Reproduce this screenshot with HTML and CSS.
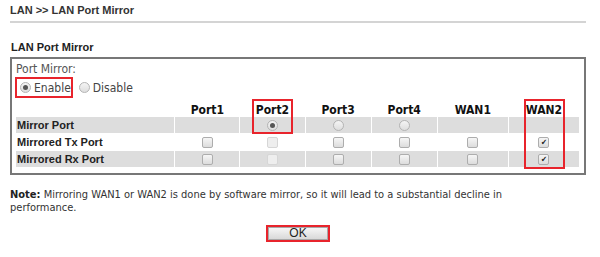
FILE: index.html
```html
<!DOCTYPE html>
<html lang="en">
<head>
  <meta charset="UTF-8">
  <title>LAN Port Mirror</title>
  <link rel="stylesheet" href="styles.css">
</head>
<body>
  <div class="crumb">LAN &gt;&gt; LAN Port Mirror</div>

  <div class="section">LAN Port Mirror</div>
  <div class="box">
    <div class="caption">Port Mirror:</div>
    <div class="choice">
      <span class="mark"><span class="radio on"></span>Enable</span>
      <span class="radio"></span>Disable
    </div>

    <div class="grid">
      <table class="ports">
        <tr class="head">
          <td class="label"></td>
          <td class="c1">Port1</td>
          <td class="c2">Port2</td>
          <td class="c3">Port3</td>
          <td class="c4">Port4</td>
          <td class="c5">WAN1</td>
          <td class="c6">WAN2</td>
        </tr>
        <tr class="shade">
          <td class="label">Mirror Port</td>
          <td></td>
          <td><span class="radio on"></span></td>
          <td><span class="radio"></span></td>
          <td><span class="radio"></span></td>
          <td></td>
          <td></td>
        </tr>
        <tr>
          <td class="label">Mirrored Tx Port</td>
          <td><span class="check"></span></td>
          <td><span class="check off"></span></td>
          <td><span class="check"></span></td>
          <td><span class="check"></span></td>
          <td><span class="check"></span></td>
          <td><span class="check on">&#10004;</span></td>
        </tr>
        <tr class="shade">
          <td class="label">Mirrored Rx Port</td>
          <td><span class="check"></span></td>
          <td><span class="check off"></span></td>
          <td><span class="check"></span></td>
          <td><span class="check"></span></td>
          <td><span class="check"></span></td>
          <td><span class="check on">&#10004;</span></td>
        </tr>
      </table>
      <!-- red call-outs drawn over the table -->
      <div class="hl hl-port2"></div>
      <div class="hl hl-wan2"></div>
    </div>
  </div>

  <p class="note"><b>Note:</b> Mirroring WAN1 or WAN2 is done by software mirror, so it will lead to a substantial decline in performance.</p>

  <div class="actions">
    <span class="mark"><button type="button" class="btn">OK</button></span>
  </div>
</body>
</html>
```

FILE: styles.css
```css
body{
  margin: 0;
  background: white;
  color: #333;
  font-family: "DejaVu Sans Condensed", "DejaVu Sans", sans-serif;
  font-size: 11px;
}
.crumb{
  margin: 0 14px 0 10px;
  padding: 4px 0;
  line-height: 13px;
  font-family: "Liberation Sans", Arial, sans-serif;
  font-weight: bold;
  border-bottom: 2px solid #d4d4d4;
}
.section{
  margin: 18px 14px 3px 11px;
  line-height: 13px;
  font-family: "Liberation Sans", Arial, sans-serif;
  font-weight: bold;
  color: #222;
}
.box{
  margin: 0 14px 0 10px;
  border: 2px solid #777;
  padding: 4px 3px 5px 3px;
}
.caption{
  line-height: 13px;
  padding-left: 1px;
  font-size: 12px;
  color: #555;
}
.choice{
  display: flex;
  align-items: center;
  height: 21px;
  margin-top: 1px;
  font-size: 12px;
  color: #444;
}
.mark{
  display: inline-flex;
  align-items: center;
  border: 2px solid #e8242c;
}
.choice .mark{
  height: 17px;
  padding: 0 0 0 3px;
}
.choice .radio{
  margin-right: 3px;
}
.choice .mark + .radio{
  margin-left: 6px;
}

.radio{
  display: inline-block;
  width: 9px;
  height: 9px;
  border: 1px solid #b4b4b4;
  border-radius: 50%;
  background: linear-gradient(#f4f4f4, #dedede);
  position: relative;
  vertical-align: middle;
}
.radio.on::after{
  content: "";
  position: absolute;
  left: 2px;
  top: 2px;
  width: 5px;
  height: 5px;
  border-radius: 50%;
  background: #555;
}
.check{
  display: inline-block;
  width: 9px;
  height: 9px;
  border: 1px solid #adadad;
  border-radius: 2px;
  background: linear-gradient(#f6f6f6, #dcdcdc);
  vertical-align: middle;
  font-size: 8px;
  line-height: 9px;
  text-align: center;
  color: #222;
  overflow: hidden;
}
.check.off{
  border-color: #d6d6d6;
  background: #eeeeee;
}

.grid{
  position: relative;
}
.ports{
  border-spacing: 1px;
  table-layout: fixed;
  width: 565px;
}
.ports td{
  padding: 0;
  height: 16px;
  text-align: center;
  line-height: 12px;
}
.ports .label{
  width: 157px;
  text-align: left;
  padding-left: 1px;
  font-family: "Liberation Sans", Arial, sans-serif;
  font-weight: bold;
  color: #222;
}
.ports .c1, .ports .c2{ width: 64px; }
.ports .c3, .ports .c4{ width: 65px; }
.ports .c5, .ports .c6{ width: 70px; }
.ports .head td{
  height: 17px;
  font-size: 12px;
  font-weight: bold;
  color: #111;
  vertical-align: bottom;
}
.ports .shade td{
  background-color: #dddddd;
}

.hl{
  position: absolute;
  border: 2px solid #e8242c;
}
.hl-port2{
  left: 237px;
  top: 1px;
  width: 41px;
  height: 35px;
  box-sizing: border-box;
}
.hl-wan2{
  left: 509px;
  top: 1px;
  width: 41px;
  height: 70px;
  box-sizing: border-box;
}

.note{
  max-width: 510px;
  margin: 13px 14px 0 10px;
  line-height: 13px;
}
.note b{
  color: #222;
}
.actions{
  display: flex;
  justify-content: center;
  margin: 11px 14px 0 10px;
}
.btn{
  width: 60px;
  height: 13px;
  margin: 0;
  padding: 0;
  border: 1px solid #a8a8a8;
  background: linear-gradient(#f6f6f6, #d9d9d9);
  font-family: "Liberation Sans", Arial, sans-serif;
  font-size: 12px;
  line-height: 11px;
  color: #222;
}
```
